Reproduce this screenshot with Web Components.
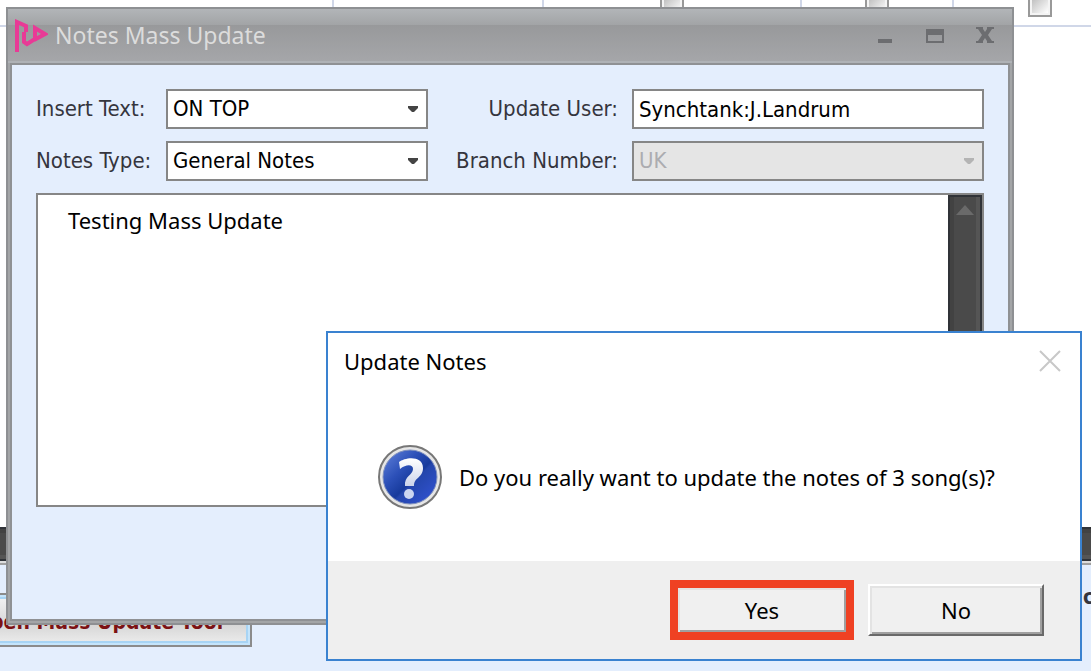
<!DOCTYPE html>
<html lang="en">
<head>
<meta charset="utf-8">
<title>Notes Mass Update</title>
<style>
    html, body {
        height: 100%;
        margin: 0;
        overflow: hidden;
        background: #fff;
    }
    body {
        position: relative;
        font-family: "Noto Sans", "Open Sans", sans-serif;
        font-size: 22px;
        line-height: 28px;
        color: #35353d;
        --panel: #e4eefd;
        --line: #868686;
        --form-font: "DejaVu Sans Condensed", "DejaVu Sans", sans-serif;
    }
    /* Windows float over the desktop */
    notes-window {
        position: absolute;
        top: 7px;
        left: 6px;
        right: 77px;
    }
    confirm-dialog {
        position: absolute;
        top: 331px;
        left: 326px;
        right: 9px;
    }
</style>
</head>
<body>

<song-backdrop></song-backdrop>

<notes-window heading="Notes Mass Update">
    <notes-form></notes-form>
</notes-window>

<confirm-dialog heading="Update Notes">
    Do you really want to update the notes of 3 song(s)?
    <dialog-button slot="actions" marked>Yes</dialog-button>
    <dialog-button slot="actions">No</dialog-button>
</confirm-dialog>

<script>
// Song list and bottom panel that sit behind the windows
class SongBackdrop extends HTMLElement {
    constructor() {
        super();
        this.attachShadow({ mode: 'open' });
        this.shadowRoot.innerHTML = `
            <style>
                :host {
                    display: flex;
                    flex-direction: column;
                    height: 100%;
                }
                .row {
                    display: grid;
                    grid-template-columns: 334px 210px 258px 152px 1fr;
                    height: 25px;
                    border-bottom: 2px solid #d0d7e8;
                }
                .cell {
                    display: flex;
                    align-items: flex-start;
                    justify-content: center;
                    border-right: 2px solid #d0d7e8;
                }
                .cell:last-child {
                    justify-content: flex-start;
                    padding-left: 74px;
                    border-right: 0;
                }
                input {
                    appearance: none;
                    box-sizing: border-box;
                    width: 24px;
                    height: 24px;
                    margin: -7px 0 0;
                    border: 2px solid #999;
                    background: linear-gradient(135deg, #bbb, #fff) center / 16px 16px no-repeat #f4f4f4;
                }
                .list {
                    flex: 1;
                }
                .scroll {
                    box-sizing: border-box;
                    height: 34px;
                    border: solid #303338;
                    border-width: 2px 0;
                    background: linear-gradient(#424242 4px, #4a4a4a 4px 26px, #555 26px);
                }
                footer {
                    box-sizing: border-box;
                    height: 110px;
                    border-top: 2px solid #ddd;
                    background: var(--panel);
                    box-shadow: inset 0 2px #a0a0a0;
                    display: flex;
                    justify-content: space-between;
                    align-items: flex-start;
                    padding-top: 30px;
                    overflow: hidden;
                    font: bold 21px/28px var(--form-font);
                }
                button {
                    box-sizing: border-box;
                    height: 54px;
                    margin-left: -52px;
                    padding: 4px 27px 0 24px;
                    border: 2px solid #8b8b8b;
                    box-shadow: inset 0 0 0 2px #c4e4fb, inset 0 0 0 4px #a8d4f4;
                    background: linear-gradient(#f4f4f4, #dcdcdc 50%, #d2d2d2 52%, #eee);
                    font: inherit;
                    color: #7c1113;
                    white-space: nowrap;
                }
                .count {
                    width: 8px;
                    margin-top: -10px;
                    white-space: nowrap;
                }
            </style>
            <div class="row">
                <div class="cell"></div>
                <div class="cell"></div>
                <div class="cell"><input type="checkbox" aria-label="Selected"></div>
                <div class="cell"><input type="checkbox" aria-label="Active"></div>
                <div class="cell"><input type="checkbox" aria-label="Locked"></div>
            </div>
            <div class="list"></div>
            <div class="scroll"></div>
            <footer>
                <button type="button">Open Mass Update Tool</button>
                <span class="count">c</span>
            </footer>
        `;
    }
}

class NotesWindow extends HTMLElement {
    constructor() {
        super();
        this.attachShadow({ mode: 'open' });
        this.shadowRoot.innerHTML = `
            <style>
                :host {
                    display: block;
                    border: 2px solid #8e9093;
                    background: #a3a5a7;
                }
                header {
                    display: flex;
                    align-items: center;
                    height: 54px;
                    padding: 0 17px 0 6px;
                    background: linear-gradient(#b2b5b8, #a2a4a6 16px, #98999b 16px, #a5a6a9 52px, #afb2b6 52px);
                    color: #dcdcdc;
                }
                h1 {
                    flex: 1;
                    margin: 0 0 0 7px;
                    padding-bottom: 2px;
                    font: inherit;
                    font-size: 23px;
                }
                header button {
                    display: flex;
                    margin-left: 30px;
                    padding: 0;
                    border: 0;
                    background: none;
                }
                .body {
                    margin: 0 2px 2px;
                    height: 554px;
                    border: 2px solid #8f9194;
                    background: var(--panel);
                }
                svg { display: block; }
            </style>
            <header>
                <svg width="34" height="34" viewBox="0 0 34 34" fill="none" stroke="#e83a96" stroke-width="4">
                    <path d="M3 33V3L12 7V13M10 13V23L13 25L21 20V9L31 15L20 21"/>
                </svg>
                <h1></h1>
                <button type="button" aria-label="Minimize"><svg width="20" height="20"><path d="M3 13h14v4H3z" fill="#6c6d70"/></svg></button>
                <button type="button" aria-label="Maximize"><svg width="20" height="20"><path d="M1 3h18v14H1zM3 9v6h14v-6z" fill="#6c6d70" fill-rule="evenodd"/></svg></button>
                <button type="button" aria-label="Close"><svg width="20" height="20"><path d="M1 1h7v2l2 3 2-3V1h7v2h-2l-4 6 4 6h2v2h-7v-2l-2-3-2 3v2H1v-2h2l4-6-4-6H1z" fill="#6c6d70"/></svg></button>
            </header>
            <div class="body"><slot></slot></div>
        `;
    }

    connectedCallback() {
        this.shadowRoot.querySelector('h1').textContent = this.getAttribute('heading');
    }
}

class NotesForm extends HTMLElement {
    constructor() {
        super();
        this.attachShadow({ mode: 'open' });
        this.shadowRoot.innerHTML = `
            <style>
                :host {
                    display: grid;
                    grid-template-columns: 130px minmax(0, 262fr) 190px minmax(0, 366fr);
                    gap: 12px 0;
                    align-items: center;
                    padding: 24px;
                }
                label {
                    font-family: var(--form-font);
                    white-space: nowrap;
                }
                label.right {
                    text-align: right;
                }
                .combo, .user {
                    display: grid;
                    height: 40px;
                }
                .user, .wide {
                    margin-left: 14px;
                }
                select, input {
                    grid-area: 1 / 1;
                    box-sizing: border-box;
                    width: 100%;
                    height: 40px;
                    padding: 0 5px;
                    border: 2px solid var(--line);
                    border-radius: 0;
                    appearance: none;
                    background: #fff;
                    font: inherit;
                    font-family: var(--form-font);
                    color: #000;
                }
                select:disabled {
                    opacity: 1;
                    background: #e5e5e5;
                    color: #acacb0;
                }
                .combo svg {
                    grid-area: 1 / 1;
                    place-self: center end;
                    margin-right: 10px;
                    pointer-events: none;
                }
                .notes {
                    grid-column: 1 / -1;
                    display: flex;
                    height: 310px;
                    border: 2px solid var(--line);
                    background: #fff;
                }
                textarea {
                    flex: 1;
                    padding: 11px 30px;
                    border: 0;
                    outline: 0;
                    resize: none;
                    overflow: hidden;
                    background: none;
                    font: inherit;
                    color: #000;
                }
                .track {
                    box-sizing: border-box;
                    width: 34px;
                    padding-top: 8px;
                    border: 2px solid #303338;
                    background: linear-gradient(90deg, #424242 4px, #4a4a4a 4px 26px, #555 26px);
                }
                .track svg {
                    display: block;
                    margin: 0 auto;
                }
            </style>
            <label for="insert">Insert Text:</label>
            <div class="combo">
                <select id="insert"><option>ON TOP</option></select>
                <svg width="10" height="6"><path d="M0 0H10V2L6 6H4L0 2z" fill="#444"/></svg>
            </div>
            <label class="right" for="user">Update User:</label>
            <div class="user"><input id="user" type="text" value="Synchtank:J.Landrum"></div>
            <label for="type">Notes Type:</label>
            <div class="combo">
                <select id="type"><option>General Notes</option></select>
                <svg width="10" height="6"><path d="M0 0H10V2L6 6H4L0 2z" fill="#444"/></svg>
            </div>
            <label class="right" for="branch">Branch Number:</label>
            <div class="combo wide">
                <select id="branch" disabled><option>UK</option></select>
                <svg width="10" height="6"><path d="M0 0H10V2L6 6H4L0 2z" fill="#b4b4b4"/></svg>
            </div>
            <div class="notes">
                <textarea aria-label="Notes" spellcheck="false">Testing Mass Update</textarea>
                <div class="track"><svg width="18" height="10"><path d="M9 0L18 10H0z" fill="#6a6a6a"/></svg></div>
            </div>
        `;
    }
}

class ConfirmDialog extends HTMLElement {
    constructor() {
        super();
        this.attachShadow({ mode: 'open' });
        this.shadowRoot.innerHTML = `
            <style>
                :host {
                    display: block;
                    border: 2px solid #3a82d0;
                    background: #fff;
                    color: #000;
                }
                header {
                    display: flex;
                    justify-content: space-between;
                    align-items: center;
                    height: 56px;
                    padding: 0 19px 0 16px;
                }
                h2 {
                    margin: 0;
                    font: inherit;
                }
                header button {
                    padding: 0;
                    border: 0;
                    background: none;
                }
                svg { display: block; }
                .message {
                    display: flex;
                    align-items: center;
                    gap: 16px;
                    height: 168px;
                    padding: 4px 0 0 49px;
                    white-space: nowrap;
                }
                .message svg { flex: none; }
                p { margin: 0; }
                footer {
                    display: flex;
                    justify-content: flex-end;
                    align-items: center;
                    gap: 14px;
                    height: 98px;
                    padding-right: 36px;
                    background: #efefef;
                }
            </style>
            <header>
                <h2></h2>
                <button type="button" aria-label="Close"><svg width="22" height="22"><path d="M1 1L21 21M21 1L1 21" stroke="#c8c8c8" stroke-width="2"/></svg></button>
            </header>
            <div class="message">
                <svg width="66" height="66" viewBox="0 0 66 66">
                    <defs>
                        <linearGradient id="disc" x1="0" y1="0" x2="1" y2="1">
                            <stop offset="0" stop-color="#6384dc"/>
                            <stop offset=".35" stop-color="#2c50b8"/>
                            <stop offset=".55" stop-color="#173a9c"/>
                            <stop offset=".58" stop-color="#2446ac"/>
                            <stop offset="1" stop-color="#3454d8"/>
                        </linearGradient>
                        <linearGradient id="mark" x1="0" y1="0" x2="0" y2="1">
                            <stop offset="0" stop-color="#fff"/>
                            <stop offset="1" stop-color="#ccd4ea"/>
                        </linearGradient>
                    </defs>
                    <circle cx="33" cy="33" r="31" fill="#e6e6e6" stroke="#777" stroke-width="2"/>
                    <circle cx="33" cy="33" r="27" fill="url(#disc)" stroke="#7f90be" stroke-width="1"/>
                    <path d="M22 18C28 13 46 11 46 24C46 34 37 33 37 42H28C27 32 36 31 36 25C36 20 29 20 23 25Z" fill="url(#mark)"/>
                    <circle cx="32" cy="50" r="5" fill="#ccd6f0"/>
                </svg>
                <p><slot></slot></p>
            </div>
            <footer><slot name="actions"></slot></footer>
        `;
    }

    connectedCallback() {
        this.shadowRoot.querySelector('h2').textContent = this.getAttribute('heading');
    }
}

class DialogButton extends HTMLElement {
    constructor() {
        super();
        this.attachShadow({ mode: 'open' });
        this.shadowRoot.innerHTML = `
            <style>
                :host {
                    display: block;
                    box-sizing: border-box;
                    width: 176px;
                }
                /* Red frame round the choice to click */
                :host([marked]) {
                    width: 184px;
                    border: 8px solid #ef4123;
                }
                button {
                    box-sizing: border-box;
                    display: block;
                    width: 100%;
                    height: 52px;
                    border: 2px solid;
                    border-color: #fff #696969 #696969 #fff;
                    box-shadow: inset 2px 2px #e3e3e3, inset -2px -2px #a0a0a0;
                    background: #f0f0f0;
                    color: #000;
                    font: inherit;
                }
                :host([marked]) button {
                    height: 44px;
                    border: 0;
                }
            </style>
            <button type="button"><slot></slot></button>
        `;
    }
}

customElements.define('song-backdrop', SongBackdrop);
customElements.define('notes-window', NotesWindow);
customElements.define('notes-form', NotesForm);
customElements.define('confirm-dialog', ConfirmDialog);
customElements.define('dialog-button', DialogButton);
</script>
</body>
</html>
